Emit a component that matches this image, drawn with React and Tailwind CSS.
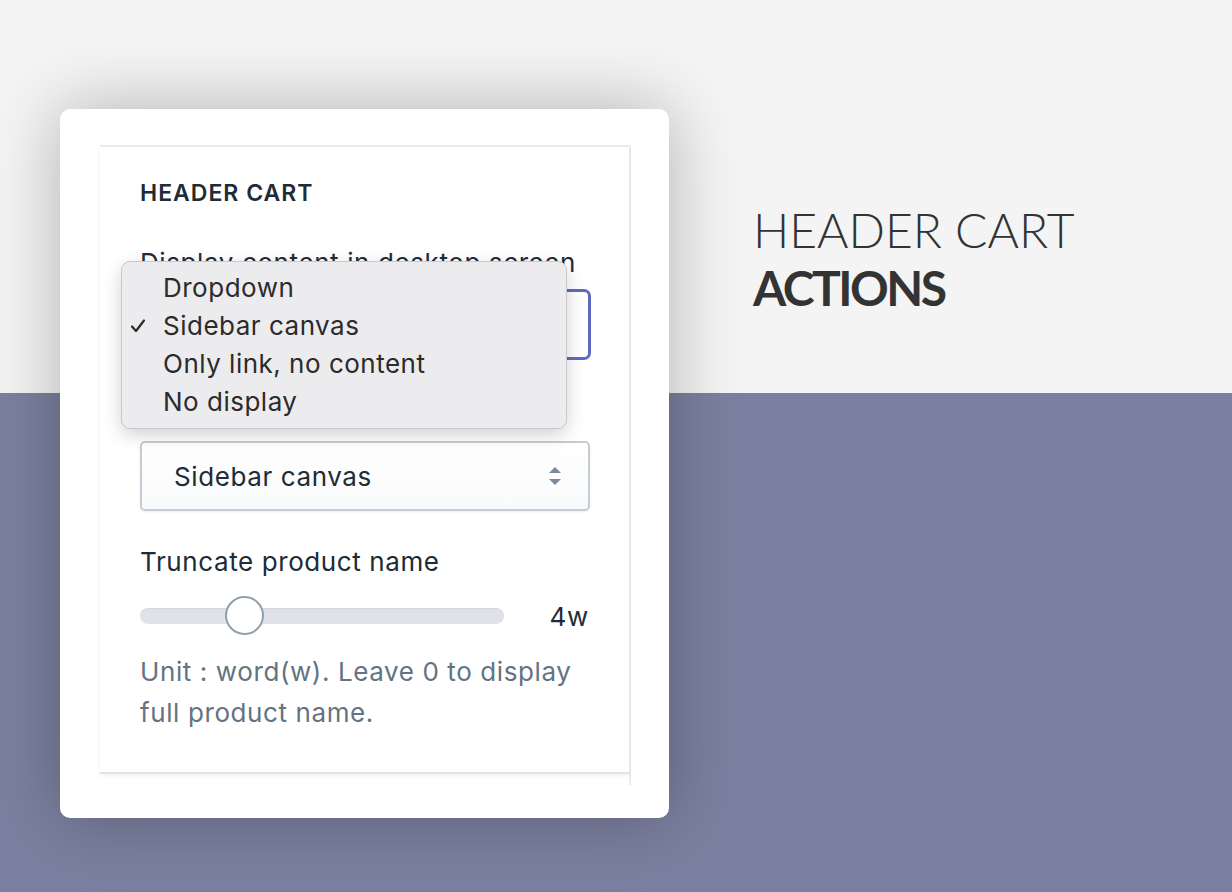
const ink = 'text-[#212b36]'

function CheckMark() {
  return (
    <svg width="16" height="16" viewBox="0 0 16 16" className="absolute left-[8px] top-[11px]">
      <path d="M2 8.5 L6 13 L14 2.5" fill="none" stroke="#2b2b2b" strokeWidth="2.2" strokeLinecap="round" strokeLinejoin="round" />
    </svg>
  )
}

function Menu() {
  const items = ['Dropdown', 'Sidebar canvas', 'Only link, no content', 'No display']
  return (
    <div className="absolute left-[-19px] top-[-28px] w-[446px] h-[168px] rounded-[9px] bg-[#ececee] border border-[#c9c9cc] shadow-[0_6px_18px_rgba(0,0,0,0.18)] pt-[7px] z-10">
      {items.map((t, i) => (
        <div key={t} className="relative h-[38px] pl-[41px] text-[26px] leading-[38px] tracking-[0.5px] text-[#2b2b2b]">
          {i === 1 && <CheckMark />}
          {t}
        </div>
      ))}
    </div>
  )
}

function Arrows() {
  return (
    <svg width="14" height="20" viewBox="0 0 14 20">
      <path d="M1 7 L7 1 L13 7 Z" fill="#7d8b98" />
      <path d="M1 13 L7 19 L13 13 Z" fill="#7d8b98" />
    </svg>
  )
}

export default function App() {
  return (
    <div className="w-full h-[892px] overflow-hidden bg-[linear-gradient(to_bottom,#f4f4f4_393px,#7b80a0_393px)] flex font-['Inter',sans-serif]">
      <div className="ml-[60px] mt-[109px] w-[609px] h-[709px] bg-white rounded-[10px] shadow-[0_0_70px_rgba(0,0,0,0.28)] pt-[36px] pl-[40px] pr-[38px] pb-[33px] flex flex-col">
        <div className="flex-1 border-t-2 border-r-2 border-[#ececec] flex flex-col">
          <div className={`pl-[40px] pr-[40px] pt-[30px] h-[627px] border-b-2 border-[#e3e3e3] shadow-[0_2px_4px_rgba(0,0,0,0.06)] ${ink}`}>
            <div className="text-[23px] leading-[32px] font-semibold tracking-[1px]">HEADER CART</div>
            <div className="mt-[36px] text-[26px] leading-[36px] tracking-[0.6px] whitespace-nowrap">Display content in desktop screen</div>
            <div className="relative mt-[8px]">
              <div className="h-[71px] w-[451px] rounded-[7px] border-[3px] border-[#5c6ac4] bg-white" />
              <Menu />
            </div>
            <div className="mt-[30px] text-[26px] leading-[36px] tracking-[0.6px] whitespace-nowrap">Display content in mobile screen</div>
            <div className="mt-[15px] h-[70px] w-[450px] rounded-[5px] border-2 border-[#c4cdd5] bg-[linear-gradient(to_bottom,#ffffff,#f9fafb)] shadow-[0_1px_2px_rgba(22,29,37,0.08)] flex items-center justify-between pl-[32px] pr-[26px]">
              <span className="text-[26px] tracking-[0.6px]">Sidebar canvas</span>
              <Arrows />
            </div>
            <div className="mt-[33px] text-[26px] leading-[36px] tracking-[0.6px]">Truncate product name</div>
            <div className="mt-[16px] flex items-center h-[40px]">
              <div className="relative w-[364px] h-[16px] rounded-full bg-[#dfe3e8] shadow-[inset_0_1px_1px_rgba(0,0,0,0.05)]">
                <div className="absolute left-[85px] top-[-12px] w-[39px] h-[39px] rounded-full bg-white border-2 border-[#919eab]" />
              </div>
              <div className="ml-auto text-[26px] tracking-[0.7px]">4w</div>
            </div>
            <div className="mt-[15px] text-[26px] leading-[41px] tracking-[0.6px] text-[#637381] w-[445px]">
              Unit : word(w). Leave 0 to display full product name.
            </div>
          </div>
        </div>
      </div>
      <div className="ml-[84px] mt-[201px] font-['Lato',sans-serif] text-[#333333] text-[48px] leading-[58px]">
        <div className="font-light">HEADER CART</div>
        <div className="font-bold tracking-[-2.5px]">ACTIONS</div>
      </div>
    </div>
  )
}
